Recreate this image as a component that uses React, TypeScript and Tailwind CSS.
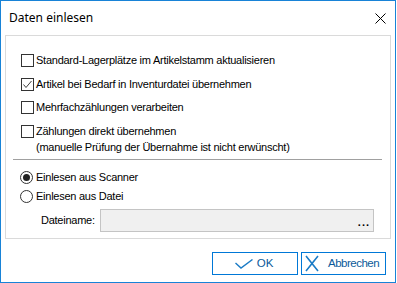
import React from "react";

const font = { fontFamily: '"Liberation Sans", Arial, sans-serif' };

function CheckBox({ checked = false }: { checked?: boolean }) {
  return (
    <span className="flex h-[13px] w-[13px] shrink-0 items-center justify-center border border-[#333333] bg-white">
      {checked && (
        <svg width="11" height="11" viewBox="0 0 11 11">
          <polyline points="1.5,5.5 4,8.5 9.5,2" fill="none" stroke="#404040" strokeWidth="1" />
        </svg>
      )}
    </span>
  );
}

function Radio({ checked = false }: { checked?: boolean }) {
  return (
    <span className="flex h-[13px] w-[13px] shrink-0 items-center justify-center rounded-full border border-[#333333] bg-white">
      {checked && <span className="h-[7px] w-[7px] rounded-full bg-[#222222]" />}
    </span>
  );
}

export default function App() {
  const checks = [
    { label: "Standard-Lagerplätze im Artikelstamm aktualisieren", checked: false, mt: "mt-0" },
    { label: "Artikel bei Bedarf in Inventurdatei übernehmen", checked: true, mt: "mt-[11px]" },
    { label: "Mehrfachzählungen verarbeiten", checked: false, mt: "mt-[10px]" },
    { label: "Zählungen direkt übernehmen", checked: false, mt: "mt-[11px]" },
  ];

  return (
    <div className="h-[283px] w-[397px] bg-white text-[11px] tracking-[-0.25px] text-black" style={font}>
      <div className="flex h-[283px] w-[396px] flex-col border border-[#1883d7] bg-white">
        {/* title bar */}
        <div className="flex h-[34px] shrink-0 items-center justify-between pl-[8px] pr-[9px]">
          <span className="text-[12px] tracking-normal text-black" style={{ fontFamily: '"Noto Sans", "Open Sans", sans-serif' }}>
            Daten einlesen
          </span>
          <svg width="11" height="11" viewBox="0 0 11 11">
            <path d="M0.5 0.5 L10.5 10.5 M10.5 0.5 L0.5 10.5" stroke="#000" strokeWidth="1" />
          </svg>
        </div>

        {/* main panel */}
        <div className="ml-[4px] h-[204px] w-[386px] shrink-0 border border-[#dadada] bg-white pl-[15px] pt-[18px]">
          <div className="flex flex-col">
            {checks.map((c) => (
              <div key={c.label} className={`flex h-[13px] items-center gap-[2px] ${c.mt}`}>
                <CheckBox checked={c.checked} />
                <span className="leading-[13px]">{c.label}</span>
              </div>
            ))}
            <div className="ml-[15px] mt-[3px] leading-[13px]">(manuelle Prüfung der Übernahme ist nicht erwünscht)</div>
          </div>

          <div className="-ml-[8px] mt-[5px] h-px w-[369px] bg-[#a0a0a0]" />

          <div className="mt-[11px] flex flex-col">
            <div className="-ml-[1px] flex h-[13px] items-center gap-[3px]">
              <Radio checked />
              <span className="leading-[13px]">Einlesen aus Scanner</span>
            </div>
            <div className="-ml-[1px] mt-[6px] flex h-[13px] items-center gap-[3px]">
              <Radio />
              <span className="leading-[13px]">Einlesen aus Datei</span>
            </div>
            <div className="mt-[6px] flex items-center">
              <span className="ml-[20px] w-[59px]">Dateiname:</span>
              <div className="flex h-[23px] w-[274px] items-end justify-end border border-[#c4c4c4] bg-[#f0f0f0] pb-[3px] pr-[3px]">
                <span className="text-[11px] font-bold leading-[11px] tracking-[1px]">...</span>
              </div>
            </div>
          </div>
        </div>

        {/* buttons */}
        <div className="mt-[13px] flex justify-end gap-[3px] pr-[9px]">
          <button className="flex h-[23px] w-[86px] items-center justify-center gap-[4px] border border-[#0078d7] bg-white text-[11.5px] tracking-normal text-[#0b5a9a]">
            <svg width="18" height="10" viewBox="0 0 18 10" className="-ml-[2px]">
              <polyline points="0.5,4 6,9 17.5,0.5" fill="none" stroke="#1a7bc6" strokeWidth="1.4" />
            </svg>
            <span>OK</span>
          </button>
          <button className="flex h-[23px] w-[85px] items-center justify-start gap-[9px] border border-[#0078d7] bg-white pl-[3px] text-[11.5px] tracking-[-0.5px] text-[#0b5a9a]">
            <svg width="14" height="17" viewBox="0 0 14 17">
              <path d="M1 1 L13 16 M13 1 L1 16" stroke="#1a7bc6" strokeWidth="1.6" />
            </svg>
            <span>Abbrechen</span>
          </button>
        </div>
      </div>
    </div>
  );
}
